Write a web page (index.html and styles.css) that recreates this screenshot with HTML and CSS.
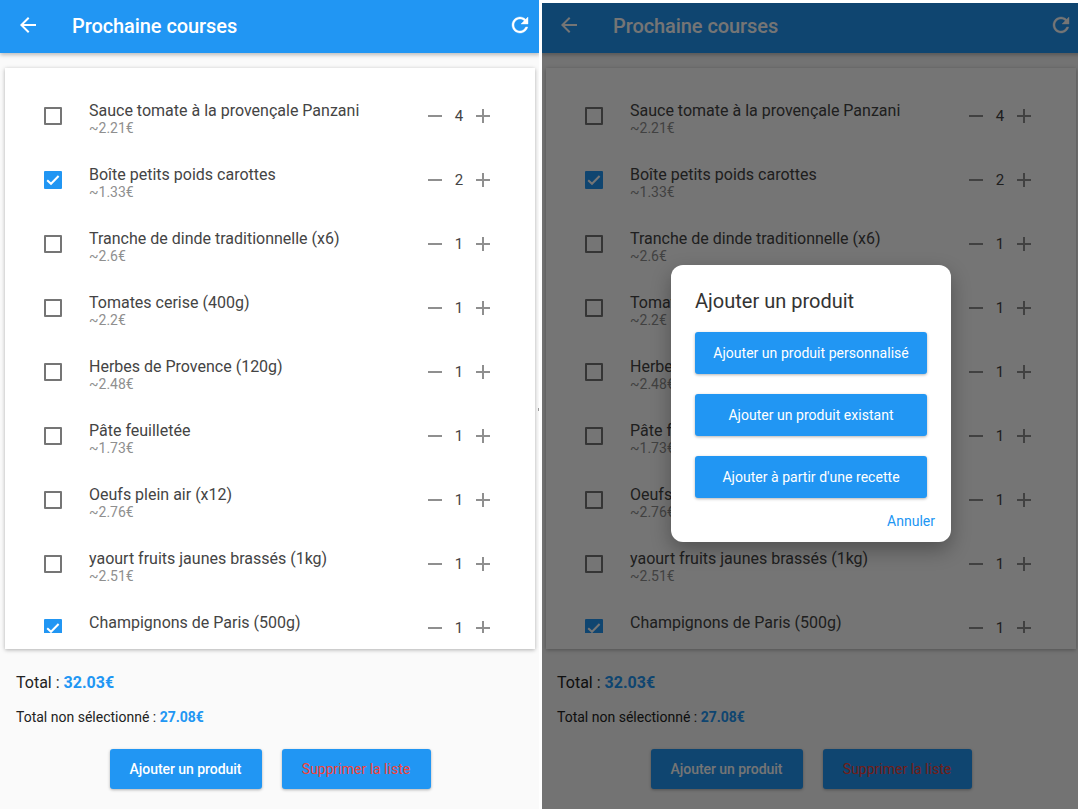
FILE: index.html
```html
<!DOCTYPE html>
<html lang="fr">
<head>
    <meta charset="UTF-8">
    <meta name="viewport" content="width=device-width, initial-scale=1.0">
    <title>Prochaine courses</title>
    <link rel="stylesheet" href="styles.css">
</head>
<body>
    <div class="screens">
        <div class="screen screen-left">
            <div class="appbar">
                <svg class="back-icon" viewBox="0 0 24 24"><path d="M20 11H7.83l5.59-5.59L12 4l-8 8 8 8 1.41-1.41L7.83 13H20z"/></svg>
                <div class="appbar-title">Prochaine courses</div>
                <svg class="refresh-icon" viewBox="0 0 24 24"><path d="M17.65 6.35C16.2 4.9 14.21 4 12 4c-4.42 0-7.99 3.58-7.99 8s3.57 8 7.99 8c3.73 0 6.84-2.55 7.73-6h-2.08c-.82 2.33-3.04 4-5.65 4-3.31 0-6-2.69-6-6s2.69-6 6-6c1.66 0 3.14.69 4.22 1.78L13 11h7V4l-2.35 2.35z"/></svg>
            </div>
            <div class="card">
                <div class="list">
                    <div class="row">
                        <div class="box"></div>
                        <div class="info"><div class="name">Sauce tomate à la provençale Panzani</div><div class="price">~2.21€</div></div>
                        <div class="qty"><span class="minus"></span><span class="count">4</span><span class="plus"></span></div>
                    </div>
                    <div class="row">
                        <div class="box checked"><svg viewBox="0 0 18 18"><path d="M3.2 9.2l3.8 3.6 7.6-7.8"/></svg></div>
                        <div class="info"><div class="name">Boîte petits poids carottes</div><div class="price">~1.33€</div></div>
                        <div class="qty"><span class="minus"></span><span class="count">2</span><span class="plus"></span></div>
                    </div>
                    <div class="row">
                        <div class="box"></div>
                        <div class="info"><div class="name">Tranche de dinde traditionnelle (x6)</div><div class="price">~2.6€</div></div>
                        <div class="qty"><span class="minus"></span><span class="count">1</span><span class="plus"></span></div>
                    </div>
                    <div class="row">
                        <div class="box"></div>
                        <div class="info"><div class="name">Tomates cerise (400g)</div><div class="price">~2.2€</div></div>
                        <div class="qty"><span class="minus"></span><span class="count">1</span><span class="plus"></span></div>
                    </div>
                    <div class="row">
                        <div class="box"></div>
                        <div class="info"><div class="name">Herbes de Provence (120g)</div><div class="price">~2.48€</div></div>
                        <div class="qty"><span class="minus"></span><span class="count">1</span><span class="plus"></span></div>
                    </div>
                    <div class="row">
                        <div class="box"></div>
                        <div class="info"><div class="name">Pâte feuilletée</div><div class="price">~1.73€</div></div>
                        <div class="qty"><span class="minus"></span><span class="count">1</span><span class="plus"></span></div>
                    </div>
                    <div class="row">
                        <div class="box"></div>
                        <div class="info"><div class="name">Oeufs plein air (x12)</div><div class="price">~2.76€</div></div>
                        <div class="qty"><span class="minus"></span><span class="count">1</span><span class="plus"></span></div>
                    </div>
                    <div class="row">
                        <div class="box"></div>
                        <div class="info"><div class="name">yaourt fruits jaunes brassés (1kg)</div><div class="price">~2.51€</div></div>
                        <div class="qty"><span class="minus"></span><span class="count">1</span><span class="plus"></span></div>
                    </div>
                    <div class="row">
                        <div class="box checked"><svg viewBox="0 0 18 18"><path d="M3.2 9.2l3.8 3.6 7.6-7.8"/></svg></div>
                        <div class="info"><div class="name">Champignons de Paris (500g)</div></div>
                        <div class="qty"><span class="minus"></span><span class="count">1</span><span class="plus"></span></div>
                    </div>
                </div>
            </div>
            <div class="totals">
                <div class="total">Total : <b>32.03€</b></div>
                <div class="total-small">Total non sélectionné : <b>27.08€</b></div>
            </div>
            <div class="actions">
                <div class="btn btn-add">Ajouter un produit</div>
                <div class="btn btn-del">Supprimer la liste</div>
            </div>
        </div>

        <div class="screen screen-right">
            <div class="appbar">
                <svg class="back-icon" viewBox="0 0 24 24"><path d="M20 11H7.83l5.59-5.59L12 4l-8 8 8 8 1.41-1.41L7.83 13H20z"/></svg>
                <div class="appbar-title">Prochaine courses</div>
                <svg class="refresh-icon" viewBox="0 0 24 24"><path d="M17.65 6.35C16.2 4.9 14.21 4 12 4c-4.42 0-7.99 3.58-7.99 8s3.57 8 7.99 8c3.73 0 6.84-2.55 7.73-6h-2.08c-.82 2.33-3.04 4-5.65 4-3.31 0-6-2.69-6-6s2.69-6 6-6c1.66 0 3.14.69 4.22 1.78L13 11h7V4l-2.35 2.35z"/></svg>
            </div>
            <div class="card">
                <div class="list">
                    <div class="row">
                        <div class="box"></div>
                        <div class="info"><div class="name">Sauce tomate à la provençale Panzani</div><div class="price">~2.21€</div></div>
                        <div class="qty"><span class="minus"></span><span class="count">4</span><span class="plus"></span></div>
                    </div>
                    <div class="row">
                        <div class="box checked"><svg viewBox="0 0 18 18"><path d="M3.2 9.2l3.8 3.6 7.6-7.8"/></svg></div>
                        <div class="info"><div class="name">Boîte petits poids carottes</div><div class="price">~1.33€</div></div>
                        <div class="qty"><span class="minus"></span><span class="count">2</span><span class="plus"></span></div>
                    </div>
                    <div class="row">
                        <div class="box"></div>
                        <div class="info"><div class="name">Tranche de dinde traditionnelle (x6)</div><div class="price">~2.6€</div></div>
                        <div class="qty"><span class="minus"></span><span class="count">1</span><span class="plus"></span></div>
                    </div>
                    <div class="row">
                        <div class="box"></div>
                        <div class="info"><div class="name">Tomates cerise (400g)</div><div class="price">~2.2€</div></div>
                        <div class="qty"><span class="minus"></span><span class="count">1</span><span class="plus"></span></div>
                    </div>
                    <div class="row">
                        <div class="box"></div>
                        <div class="info"><div class="name">Herbes de Provence (120g)</div><div class="price">~2.48€</div></div>
                        <div class="qty"><span class="minus"></span><span class="count">1</span><span class="plus"></span></div>
                    </div>
                    <div class="row">
                        <div class="box"></div>
                        <div class="info"><div class="name">Pâte feuilletée</div><div class="price">~1.73€</div></div>
                        <div class="qty"><span class="minus"></span><span class="count">1</span><span class="plus"></span></div>
                    </div>
                    <div class="row">
                        <div class="box"></div>
                        <div class="info"><div class="name">Oeufs plein air (x12)</div><div class="price">~2.76€</div></div>
                        <div class="qty"><span class="minus"></span><span class="count">1</span><span class="plus"></span></div>
                    </div>
                    <div class="row">
                        <div class="box"></div>
                        <div class="info"><div class="name">yaourt fruits jaunes brassés (1kg)</div><div class="price">~2.51€</div></div>
                        <div class="qty"><span class="minus"></span><span class="count">1</span><span class="plus"></span></div>
                    </div>
                    <div class="row">
                        <div class="box checked"><svg viewBox="0 0 18 18"><path d="M3.2 9.2l3.8 3.6 7.6-7.8"/></svg></div>
                        <div class="info"><div class="name">Champignons de Paris (500g)</div></div>
                        <div class="qty"><span class="minus"></span><span class="count">1</span><span class="plus"></span></div>
                    </div>
                </div>
            </div>
            <div class="totals">
                <div class="total">Total : <b>32.03€</b></div>
                <div class="total-small">Total non sélectionné : <b>27.08€</b></div>
            </div>
            <div class="actions">
                <div class="btn btn-add">Ajouter un produit</div>
                <div class="btn btn-del">Supprimer la liste</div>
            </div>

            <div class="overlay">
                <div class="dialog">
                    <div class="dialog-title">Ajouter un produit</div>
                    <div class="btn dialog-btn">Ajouter un produit personnalisé</div>
                    <div class="btn dialog-btn">Ajouter un produit existant</div>
                    <div class="btn dialog-btn">Ajouter à partir d'une recette</div>
                    <div class="dialog-cancel">Annuler</div>
                </div>
            </div>
        </div>

        <div class="divider"></div>
    </div>
</body>
</html>
```

FILE: styles.css
```css
html, body {
    margin: 0;
    padding: 0;
    background: white;
}
body {
    font-family: Roboto, "Liberation Sans", sans-serif;
    color: #333;
}
.screens {
    position: relative;
    display: flex;
    gap: 1px;
    width: 1078px;
    height: 809px;
    overflow: hidden;
}
.screen {
    position: relative;
    flex: none;
    width: 540px;
    height: 809px;
    background-color: #fafafa;
    overflow: hidden;
}
/* white strip above the second screenshot */
.screen-right::after {
    content: "";
    position: absolute;
    top: 0;
    left: 0;
    right: 0;
    height: 3px;
    background: white;
}
.divider {
    position: absolute;
    top: 0;
    bottom: 0;
    left: 539px;
    width: 3px;
    background: white;
}
.divider::after {
    content: "";
    position: absolute;
    top: 408px;
    left: -1px;
    width: 1px;
    height: 3px;
    background: #999;
}
.appbar {
    position: relative;
    display: flex;
    align-items: center;
    height: 50px;
    padding: 0 8px 3px 16px;
    background-color: #2196f3;
    color: white;
    box-shadow: 0 2px 4px rgba(0, 0, 0, 0.25);
}
.back-icon, .refresh-icon {
    width: 24px;
    height: 24px;
    fill: white;
    flex: none;
}
.refresh-icon {
    stroke: white;
    stroke-width: 0.4;
}
.appbar-title {
    flex: 1;
    margin: 2px 0 0 32px;
    font-size: 20px;
    font-weight: 500;
    letter-spacing: -0.08px;
}
.card {
    margin: 15px 5px 0 5px;
    height: 581px;
    padding: 16px 0;
    box-sizing: border-box;
    background: white;
    box-shadow: 0 1px 4px rgba(0, 0, 0, 0.3);
}
.list {
    height: 549px;
    overflow: hidden;
}
.row {
    display: flex;
    align-items: center;
    height: 64px;
}
.box {
    flex: none;
    width: 18px;
    height: 18px;
    margin-left: 39px;
    border: 2px solid #757575;
    border-radius: 1px;
    box-sizing: border-box;
}
.box.checked {
    background-color: #2196f3;
    border: none;
}
.box svg {
    display: block;
    width: 18px;
    height: 18px;
    fill: none;
    stroke: white;
    stroke-width: 2;
}
.info {
    flex: 1;
    margin-left: 27px;
    padding-top: 4px;
    height: 35px;
}
.name {
    font-size: 16px;
    line-height: 19px;
    color: #444;
}
.price {
    font-size: 14px;
    line-height: 16px;
    color: #8f8f8f;
}
.qty {
    display: flex;
    align-items: center;
    margin-right: 45px;
}
.minus, .plus {
    position: relative;
    display: block;
    width: 14px;
    height: 14px;
}
.minus::before, .plus::before, .plus::after {
    content: "";
    position: absolute;
    background-color: #8f8f8f;
    left: 0;
    right: 0;
    top: 6px;
    height: 2px;
}
.plus::after {
    left: 6px;
    right: 6px;
    top: 0;
    bottom: 0;
    height: auto;
}
.count {
    width: 18px;
    margin: 0 8px;
    font-size: 15px;
    text-align: center;
    color: #444;
}
.totals {
    padding: 24px 16px 0;
    color: #222;
}
.total {
    font-size: 16px;
    line-height: 20px;
}
.total b, .total-small b {
    color: #2196f3;
    font-weight: 700;
}
.total-small {
    margin-top: 14px;
    font-size: 14px;
    line-height: 20px;
}
.actions {
    display: flex;
    justify-content: center;
    gap: 20px;
    margin-top: 22px;
}
.btn {
    display: flex;
    align-items: center;
    justify-content: center;
    height: 40px;
    background-color: #2196f3;
    border-radius: 3px;
    color: white;
    font-size: 14px;
    font-weight: 500;
    box-shadow: 0 1px 3px rgba(0, 0, 0, 0.3);
}
.btn-add {
    width: 152px;
    letter-spacing: -0.05px;
}
.btn-del {
    width: 149px;
    color: #f44336;
    font-weight: 400;
}
.overlay {
    position: absolute;
    inset: 0;
    display: flex;
    align-items: center;
    justify-content: center;
    background: rgba(0, 0, 0, 0.54);
}
.dialog {
    width: 280px;
    height: 277px;
    margin-bottom: 3px;
    padding: 24px 16px 0 24px;
    box-sizing: border-box;
    background: white;
    border-radius: 12px;
    box-shadow: 0 8px 20px rgba(0, 0, 0, 0.3);
}
.dialog-title {
    font-size: 20px;
    line-height: 24px;
    color: #333;
    margin-bottom: 19px;
}
.dialog-btn {
    width: 232px;
    height: 42px;
    margin-bottom: 20px;
    font-weight: 400;
    letter-spacing: 0.03px;
}
.dialog-cancel {
    margin-top: -5px;
    font-size: 14px;
    line-height: 16px;
    color: #2196f3;
    text-align: right;
}
```
